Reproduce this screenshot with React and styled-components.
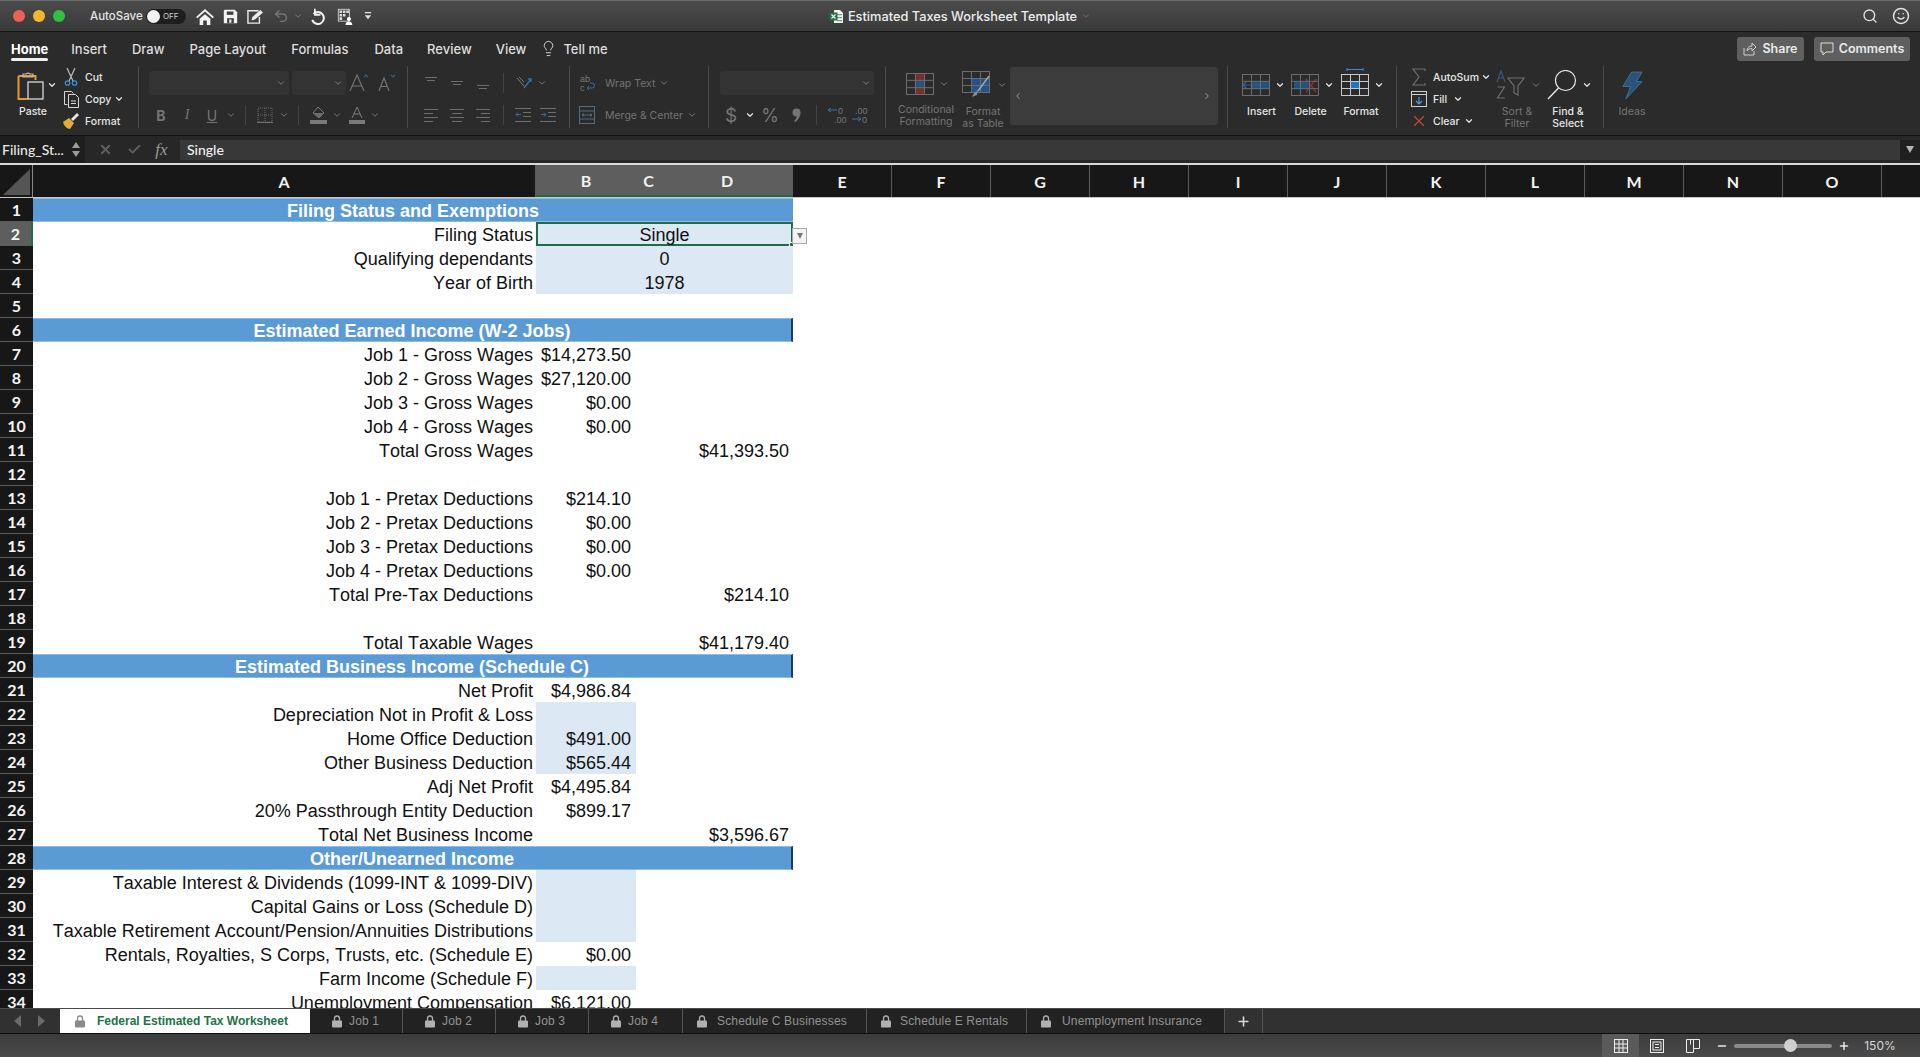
import styled, { createGlobalStyle } from "styled-components";
import { ChevronDown, Search, Smile, Lightbulb, Undo2, Check, X, Plus, Minus, ChevronLeft, ChevronRight } from "lucide-react";

const GlobalStyle = createGlobalStyle`
  html, body { margin: 0; padding: 0; height: 100%; background: #2b2b2b; }
  * { box-sizing: border-box; }
  svg { flex: none; }
`;

const uiFont = `"Inter", "Liberation Sans", sans-serif`;

const Window = styled.div`
  width: 1920px;
  height: 1057px;
  display: flex;
  flex-direction: column;
  overflow: hidden;
  font-family: ${uiFont};
  color: #e8e8e8;
`;

/* title bar */
const TitleBar = styled.div`
  height: 32px;
  flex: none;
  display: grid;
  grid-template-columns: 1fr auto 1fr;
  align-items: center;
  background: linear-gradient(#4c4c4c, #393939);
  border-top: 1px solid #6a6a6a;
  border-bottom: 1px solid #151515;
`;
const QuickBar = styled.div`
  display: flex;
  align-items: center;
  padding-left: 13px;
`;
const Light = styled.span`
  width: 12px;
  height: 12px;
  border-radius: 50%;
  margin-right: 8px;
  background: ${(p) => p.$c};
`;
const AutoSave = styled.span`
  font-size: 11.5px;
  font-weight: 500;
  margin-left: 17px;
  color: #e4e4e4;
  width: 56px;
`;
const Toggle = styled.span`
  width: 40px;
  height: 15px;
  border-radius: 8px;
  background: #1e1e1e;
  display: flex;
  align-items: center;
  gap: 3px;
  font-size: 8px;
  color: #cfcfcf;
  &::before {
    content: "";
    width: 13px;
    height: 13px;
    margin-left: 1px;
    border-radius: 50%;
    background: #f2f2f2;
  }
`;
const Title = styled.div`
  display: flex;
  align-items: center;
  gap: 4px;
  font-size: 12.8px;
  font-weight: 500;
  color: #ededed;
`;
const TitleRight = styled.div`
  display: flex;
  justify-content: flex-end;
  align-items: center;
  gap: 14px;
  padding-right: 10px;
  color: #e2e2e2;
`;

/* ribbon */
const Ribbon = styled.div`
  background: #2b2b2b;
  flex: none;
  border-bottom: 1px solid #0f0f0f;
`;
const TabRow = styled.div`
  height: 33px;
  display: flex;
  align-items: center;
  padding: 0 10px 0 11px;
`;
const RibbonTab = styled.span`
  flex: none;
  white-space: nowrap;
  font-size: 13px;
  font-weight: 500;
  margin-right: ${(p) => p.$gap}px;
  margin-left: ${(p) => p.$ml || 0}px;
  color: ${(p) => (p.$on ? "#fff" : "#dedede")};
  position: relative;
  ${(p) => p.$on && `
    font-weight: 700;
    &::after {
      content: "";
      position: absolute;
      left: 0;
      right: 0;
      bottom: -4px;
      height: 3px;
      border-radius: 2px;
      background: #efefef;
    }
  `}
`;
const TopButton = styled.span`
  height: 24px;
  width: ${(p) => p.$w}px;
  margin-left: ${(p) => (p.$push ? "auto" : `${p.$ml}px`)};
  background: #5f5f5f;
  border-radius: 3px;
  display: flex;
  align-items: center;
  justify-content: center;
  gap: 5px;
  font-size: 12.5px;
  font-weight: 600;
  color: #eaeaea;
`;
const GroupRow = styled.div`
  height: 70px;
  display: flex;
`;
const Group = styled.div`
  width: ${(p) => p.$w}px;
  height: 62px;
  margin-top: 1px;
  padding-left: ${(p) => p.$pl || 0}px;
  display: flex;
  ${(p) => p.$stack && "flex-direction: column; justify-content: flex-start;"}
  border-right: ${(p) => (p.$last ? "none" : "1px solid #4b4b4b")};
`;
const ToolRow = styled.div`
  display: flex;
  align-items: center;
  height: 24px;
  margin-top: ${(p) => p.$mt || 0}px;
  padding-left: ${(p) => p.$pl || 0}px;
`;
const Slot = styled.span`
  width: ${(p) => p.$w}px;
  flex: none;
  display: flex;
  align-items: center;
  justify-content: center;
  padding-bottom: ${(p) => p.$pb || 0}px;
  color: ${(p) => (p.$on ? "#e8e8e8" : "#757575")};
  font-size: ${(p) => p.$fs || 13}px;
  font-family: ${(p) => (p.$serif ? `"Liberation Serif", serif` : uiFont)};
  font-weight: ${(p) => p.$fw || 400};
  font-style: ${(p) => (p.$it ? "italic" : "normal")};
`;
const Divider = styled.span`
  width: ${(p) => p.$w}px;
  flex: none;
  display: flex;
  justify-content: center;
  &::before {
    content: "";
    width: 1px;
    height: 20px;
    background: #444;
  }
`;
const Combo = styled.span`
  width: ${(p) => p.$w}px;
  height: 24px;
  margin-right: ${(p) => p.$mr || 0}px;
  flex: none;
  background: #333;
  border-radius: 3px;
  display: flex;
  align-items: center;
  justify-content: flex-end;
  padding-right: 3px;
  color: #8a8a8a;
`;
const Small = styled.span`
  font-size: 10.5px;
  font-weight: ${(p) => (p.$on ? 500 : 400)};
  color: ${(p) => (p.$on ? "#e6e6e6" : "#737373")};
  white-space: nowrap;
  margin-left: ${(p) => p.$ml || 0}px;
  margin-top: ${(p) => p.$mt || 0}px;
`;
const PasteBlock = styled.div`
  width: 36px;
  flex: none;
  display: flex;
  flex-direction: column;
  align-items: center;
  padding-top: 5px;
`;
const ClipList = styled.div`
  width: ${(p) => (p.$w ? `${p.$w}px` : "auto")};
  flex: none;
  display: flex;
  flex-direction: column;
`;
const ClipRow = styled.div`
  height: 22px;
  flex: none;
  display: flex;
  align-items: center;
  padding-left: ${(p) => p.$pl || 0}px;
`;
const ClipIcon = styled.span`
  width: ${(p) => p.$w || 20}px;
  flex: none;
  display: flex;
  justify-content: center;
`;
const BigItem = styled.div`
  width: ${(p) => p.$w}px;
  flex: none;
  display: flex;
  flex-direction: column;
  align-items: center;
  padding-top: 6px;
`;
const BigIcon = styled.div`
  height: 26px;
  display: flex;
  align-items: center;
  padding-left: ${(p) => (p.$bare ? 0 : 8)}px;
`;
const Chev = styled.span`
  width: 20px;
  display: flex;
  justify-content: center;
  color: ${(p) => (p.$on ? "#e2e2e2" : "#777")};
`;
const BigLabel = styled.div`
  margin-top: 8px;
  font-size: 10.5px;
  line-height: 12px;
  text-align: center;
  font-weight: ${(p) => (p.$on ? 500 : 400)};
  color: ${(p) => (p.$on ? "#e6e6e6" : "#757575")};
  white-space: nowrap;
`;
const Gallery = styled.div`
  width: 208px;
  height: 58px;
  margin: 1px 0 0 4px;
  background: #3c3c3c;
  border-radius: 3px;
  display: flex;
  align-items: center;
  justify-content: space-between;
  padding: 0 6px 0 3px;
  color: #8e8e8e;
`;

/* formula bar */
const FormulaBar = styled.div`
  height: 29px;
  flex: none;
  display: flex;
  align-items: center;
  background: #272727;
  border-bottom: 2px solid #d9d9d9;
  font-family: "Lato", sans-serif;
  font-size: 14px;
  font-weight: 500;
`;
const NameBox = styled.div`
  width: 85px;
  height: 100%;
  flex: none;
  padding-left: 2px;
  display: flex;
  align-items: center;
  justify-content: space-between;
  background: #1e1e1e;
`;
const Stepper = styled.span`
  width: 18px;
  display: flex;
  flex-direction: column;
  align-items: center;
  gap: 3px;
  &::before, &::after {
    content: "";
    border-left: 4px solid transparent;
    border-right: 4px solid transparent;
  }
  &::before { border-bottom: 6px solid #9c9c9c; }
  &::after { border-top: 6px solid #9c9c9c; }
`;
const FxTools = styled.div`
  width: 95px;
  flex: none;
  display: flex;
  align-items: center;
  color: #5e5e5e;
`;
const Fx = styled.span`
  font-family: "Liberation Serif", serif;
  font-style: italic;
  font-size: 17px;
  color: #9a9a9a;
`;
const FormulaInput = styled.div`
  flex: 1;
  height: 20px;
  padding-left: 7px;
  line-height: 20px;
  background: #383838;
  color: #f0f0f0;
`;
const FormulaEnd = styled.div`
  width: 20px;
  flex: none;
  height: 20px;
  display: flex;
  align-items: center;
  justify-content: center;
  background: #1f1f1f;
  &::before {
    content: "";
    border-left: 4px solid transparent;
    border-right: 4px solid transparent;
    border-top: 7px solid #b5b5b5;
  }
`;

/* grid */
const ColumnHeader = styled.div`
  height: 33px;
  flex: none;
  display: grid;
  grid-template-columns: 33px 503px 100px 25px 132px repeat(11, 99px) 1fr;
  background: #171717;
  border-bottom: 1px solid #c6c6c6;
`;
const Corner = styled.div`
  background: #171717;
  border-right: 1px solid #888;
  padding: 4px 2px 2px 3px;
  &::before {
    content: "";
    display: block;
    height: 100%;
    background: #555;
    clip-path: polygon(100% 0, 100% 100%, 0 100%);
  }
`;
const ColLabel = styled.div`
  display: flex;
  align-items: center;
  justify-content: center;
  font-family: "Lato", sans-serif;
  font-size: 16px;
  font-weight: 700;
  color: #f2f2f2;
  background: ${(p) => (p.$on ? "#5e5e5e" : "transparent")};
  border-bottom: ${(p) => (p.$on ? "2px solid #1f6d48" : "none")};
  border-right: ${(p) => (p.$on ? "none" : "1px solid #5a5a5a")};
`;
const Sheet = styled.div`
  flex: 1;
  min-height: 0;
  overflow: hidden;
  background: #fff;
  font-family: "Liberation Sans", Arial, sans-serif;
  font-size: 18px;
  font-kerning: none;
  color: #111;
`;
const Row = styled.div`
  height: 24px;
  display: grid;
  grid-template-columns: 33px 503px 100px 25px 132px;
  grid-template-rows: 24px;
  align-items: stretch;
  line-height: 26px;
  white-space: nowrap;
`;
const RowNum = styled.div`
  display: flex;
  align-items: center;
  justify-content: center;
  font-family: "Lato", sans-serif;
  font-size: 16px;
  font-weight: 700;
  color: #f4f4f4;
  background: ${(p) => (p.$on ? "#5e5e5e" : "#171717")};
  border-bottom: 1px solid #5a5a5a;
  ${(p) => p.$on && "border-right: 2px solid #1f6d48;"}
`;
const Label = styled.div`
  text-align: right;
  padding-right: 3px;
`;
const Amount = styled.div`
  grid-column: ${(p) => p.$col};
  text-align: right;
  padding-right: ${(p) => (p.$col === 5 ? 4 : 5)}px;
  background: ${(p) => (p.$fill ? "#dce9f5" : "transparent")};
`;
const Merged = styled.div`
  grid-column: 3 / 6;
  text-align: center;
  position: relative;
  background: #dce9f5;
  ${(p) => p.$sel && `
    z-index: 1;
    border: 2px solid #1f6d48;
    line-height: 22px;
  `}
`;
const FillHandle = styled.span`
  position: absolute;
  right: -3px;
  bottom: -3px;
  width: 5px;
  height: 5px;
  background: #1f6d48;
  border: 1px solid #fff;
`;
const Dropper = styled.span`
  position: absolute;
  left: 100%;
  top: 4px;
  margin-left: 1px;
  width: 15px;
  height: 16px;
  background: #f4f4f4;
  border: 1px solid #aaa;
  display: flex;
  align-items: center;
  justify-content: center;
  &::before {
    content: "";
    border-left: 3.5px solid transparent;
    border-right: 3.5px solid transparent;
    border-top: 6px solid #777;
  }
`;
const Banner = styled.div`
  grid-column: 2 / 6;
  text-align: center;
  background: #5b9bd5;
  color: #fff;
  font-weight: 700;
  border-top: 1px solid #8fbce4;
  border-bottom: 1px solid #8fbce4;
  line-height: 24px;
  border-right: ${(p) => (p.$edge ? "2px solid #1c3c5c" : "none")};
`;

/* sheet tabs */
const TabStrip = styled.div`
  height: 26px;
  flex: none;
  display: flex;
  background: #313131;
  border-top: 1px solid #4a4a4a;
  border-bottom: 1px solid #0d0d0d;
  font-family: "Liberation Sans", Arial, sans-serif;
  font-size: 12px;
`;
const TabNav = styled.div`
  width: 60px;
  flex: none;
  display: flex;
  align-items: center;
  gap: 17px;
  padding-left: 14px;
`;
const NavArrow = styled.span`
  border-top: 6px solid transparent;
  border-bottom: 6px solid transparent;
  border-${(p) => (p.$next ? "left" : "right")}: 7px solid #6a6a6a;
`;
const SheetTab = styled.div`
  width: ${(p) => p.$w}px;
  height: 24px;
  flex: none;
  display: flex;
  align-items: center;
  gap: ${(p) => p.$gap || 8}px;
  padding-left: ${(p) => p.$pl}px;
  background: ${(p) => (p.$on ? "#fff" : "#222")};
  color: ${(p) => (p.$on ? "#217346" : "#939393")};
  font-weight: ${(p) => (p.$on ? 700 : 400)};
  letter-spacing: ${(p) => (p.$on ? 0 : 0.15)}px;
  border-right: ${(p) => (p.$on ? "none" : "1px solid #555")};
  white-space: nowrap;
`;
const AddTab = styled.div`
  width: 38px;
  flex: none;
  display: flex;
  align-items: center;
  justify-content: center;
  color: #d9d9d9;
  border-right: 1px solid #555;
`;

/* status bar */
const StatusBar = styled.div`
  height: 23px;
  flex: none;
  display: flex;
  align-items: center;
  justify-content: flex-end;
  padding-right: 20px;
  background: linear-gradient(#3c3c3c, #4a4a4a);
  color: #e0e0e0;
`;
const ViewBtn = styled.span`
  width: ${(p) => p.$w}px;
  height: 23px;
  flex: none;
  display: flex;
  align-items: center;
  justify-content: center;
  background: ${(p) => (p.$on ? "#5a5a5a" : "transparent")};
`;
const Slider = styled.span`
  width: 98px;
  height: 4px;
  flex: none;
  margin: 0 1px;
  border-radius: 2px;
  background: #8a8a8a;
  display: flex;
  align-items: center;
  padding-left: 50px;
  &::before {
    content: "";
    flex: none;
    width: 13px;
    height: 13px;
    border-radius: 50%;
    background: #cfcfcf;
  }
`;
const Zoom = styled.span`
  width: 40px;
  flex: none;
  margin-left: 5px;
  text-align: center;
  font-size: 12px;
  color: #d8d8d8;
`;

const chev = (on) => <ChevronDown size={10} strokeWidth={on ? 3 : 2.4} color={on ? "#e2e2e2" : "#7a7a7a"} />;

/* drawn icons */
const HomeIcon = () => (
  <svg width="18" height="17" viewBox="0 0 20 19" fill="#f2f2f2"><path d="M10 1 0 10l1.4 1.5L10 4l8.6 7.5L20 10zM4 12l6-5 6 5v7h-4v-5H8v5H4z" /></svg>
);
const SaveIcon = () => (
  <svg width="15" height="15" viewBox="0 0 18 18"><path fill="#f2f2f2" d="M2 1h12l3 3v13H1V2z" /><rect x="4.5" y="3" width="8" height="4" fill="#3f3f3f" /><rect x="5" y="11" width="8" height="6" fill="#3f3f3f" /><rect x="7.5" y="12.5" width="2.5" height="4" fill="#f2f2f2" /></svg>
);
const EditIcon = () => (
  <svg width="18" height="15" viewBox="0 0 20 17" fill="none" stroke="#ececec" strokeWidth="1.6"><path d="M15 9v7H2V2h12" /><path d="M6 13l1-4 9-8 3 3-9 8z" fill="#ececec" stroke="none" /></svg>
);
const RedoIcon = () => (
  <svg width="16" height="17" viewBox="0 0 18 20" fill="none" stroke="#f2f2f2" strokeWidth="2.4"><path d="M5 7a7 7 0 1 1-1.6 7" /><path d="M6.5 1v7H13" strokeWidth="2" /></svg>
);
const GridPerson = () => (
  <svg width="17" height="17" viewBox="0 0 20 20"><rect x="1.5" y="1.5" width="13" height="14" fill="none" stroke="#ddd" /><path d="M3 3h3v3H3zM7 3h3v3H7zM11 3h3v3h-3zM3 7h3v3H3zM7 7h3v3H7zM3 11h3v3H3z" fill="#ddd" /><circle cx="14" cy="13" r="2.4" fill="#fff" /><path d="M10 20c0-3 2-4 4-4s4 1 4 4z" fill="#fff" /></svg>
);
const MoreIcon = () => (
  <svg width="8" height="10" viewBox="0 0 10 12" fill="#e0e0e0"><rect x="1" y="1" width="8" height="1.6" /><path d="M1 5h8l-4 5z" /></svg>
);
const ExcelDoc = () => (
  <svg width="15" height="15" viewBox="0 0 15 15"><path d="M5 1h6l3 3v10H5z" fill="#f1f1f1" /><rect x="8" y="5" width="5" height="1.2" fill="#6a9a80" /><rect x="8" y="8" width="5" height="1.2" fill="#6a9a80" /><rect x="8" y="11" width="5" height="1.2" fill="#6a9a80" /><rect x="0.5" y="3.5" width="8" height="8" fill="#1f7244" /><path d="M2.5 5.5l4 4M6.5 5.5l-4 4" stroke="#fff" strokeWidth="1.1" /></svg>
);
const PasteIcon = () => (
  <svg width="32" height="29" viewBox="0 0 32 29" fill="none"><path d="M1.5 5h17v4M1.5 5v23h9" stroke="#e59a2c" strokeWidth="2" /><path d="M6 5V3h3a3 3 0 0 1 4 0h3v3H6z" stroke="#bbb" strokeWidth="1.2" /><rect x="11" y="11" width="15" height="17" stroke="#e6e6e6" strokeWidth="1.2" /></svg>
);
const ScissorsIcon = () => (
  <svg width="14" height="20" viewBox="0 0 14 20" fill="none"><path d="M3 1l6 13M11 1L5 14" stroke="#bcbcbc" strokeWidth="1.2" /><circle cx="3.5" cy="16" r="2.2" stroke="#3a8ed8" strokeWidth="1.3" /><circle cx="10.5" cy="16" r="2.2" stroke="#3a8ed8" strokeWidth="1.3" /></svg>
);
const CopyIcon = () => (
  <svg width="17" height="18" viewBox="0 0 17 18" fill="none" stroke="#d8d8d8"><path d="M4.5 14.5h-3v-13h7l2 2" /><path d="M5.5 4.5h7l3 3v10h-10z" /><path d="M8 11h5M8 13.5h5" /></svg>
);
const BrushIcon = () => (
  <svg width="18" height="18" viewBox="0 0 18 18"><path d="M1 10l6-4 5 5-4 6c-3 0-6-3-7-7z" fill="#e8a93a" /><path d="M9 7l6-6 2 2-6 6z" fill="#e6e6e6" /></svg>
);
const BigA = ({ size, up }) => (
  <svg width="22" height="20" viewBox="0 0 22 20" fill="none" stroke="#727272" strokeWidth="1.2"><path d={size === 1 ? "M2 18 9 2l7 16M4.5 13h9" : "M4 18 9 5l5 13M6 13.5h6"} /><path d={up ? "M16 4l2-2 2 2" : "M16 2l2 2 2-2"} stroke="#3f5f82" /></svg>
);
const Borders = () => (
  <svg width="16" height="16" viewBox="0 0 16 16" fill="none" stroke="#6e6e6e" strokeDasharray="1 1"><rect x="1" y="1" width="14" height="14" /><path d="M8 1v14M1 8h14" /><path d="M0 15.5h16" strokeDasharray="none" /></svg>
);
const FillColor = () => (
  <svg width="18" height="18" viewBox="0 0 18 18"><path d="M8 1l6 6-5 5-6-5z" fill="none" stroke="#777" /><path d="M3 7h10l-4 5z" fill="#6b6b6b" /><rect x="0" y="14" width="17" height="4" fill="#7a7a7a" /></svg>
);
const FontColor = () => (
  <svg width="18" height="18" viewBox="0 0 18 18" fill="none"><path d="M4 12 9 1l5 11M6 8h6" stroke="#7a7a7a" /><rect x="1" y="14" width="16" height="4" fill="#7a7a7a" /></svg>
);
const AlignIcon = ({ rows }) => (
  <svg width="16" height="16" viewBox="0 0 16 16" stroke="#6e6e6e">{rows.map(([y, a, b]) => <path key={y} d={`M${a} ${y}.5H${b}`} />)}</svg>
);
const Orient = () => (
  <svg width="18" height="16" viewBox="0 0 18 16" fill="none"><path d="M2 3l7 8M4 2l5 5" stroke="#777" /><path d="M9 13l7-9M13 4h3v3" stroke="#3f6a94" strokeWidth="1.4" /></svg>
);
const Indent = ({ flip }) => (
  <svg width="16" height="14" viewBox="0 0 16 14" stroke="#6e6e6e"><path d="M0 .5h16M8 4.5h8M8 8.5h8M0 13.5h16" /><path d={flip ? "M1 6.5h5M4 4.5l2 2-2 2" : "M1 6.5h5M3 4.5l-2 2 2 2"} stroke="#3f6a94" fill="none" /></svg>
);
const WrapIcon = () => (
  <svg width="18" height="20" viewBox="0 0 18 20" fill="none"><text x="2" y="9" fontSize="9" fill="#777" fontFamily="Liberation Sans">ab</text><text x="2" y="18" fontSize="9" fill="#777" fontFamily="Liberation Sans">c</text><path d="M9 15h5a2 2 0 0 0 0-5h-2M11 13l-2 2 2 2" stroke="#3f6a94" /></svg>
);
const MergeIcon = () => (
  <svg width="16" height="18" viewBox="0 0 16 18" fill="none" stroke="#566a7e"><rect x=".5" y=".5" width="15" height="17" /><path d="M.5 5h15M.5 13h15M3 9h10M5 7.5 3 9l2 1.5M11 7.5 13 9l-2 1.5" /></svg>
);
const CommaIcon = () => (
  <svg width="9" height="14" viewBox="0 0 9 14" fill="#757575"><circle cx="4.5" cy="4.5" r="4" /><path d="M8.4 4.5C8.5 8 6.5 12 3 14l-.8-1C4 11.5 4.8 9 4.5 7z" /></svg>
);
const DecIcon = ({ flip }) => (
  <svg width="22" height="18" viewBox="0 0 22 18">
    <text x={flip ? 7 : 12} y="8" fontSize="9" fill="#777" fontFamily="Liberation Sans">{flip ? ".00" : "0"}</text>
    <text x={flip ? 14 : 8} y="17" fontSize="9" fill="#777" fontFamily="Liberation Sans">{flip ? "0" : ".00"}</text>
    <path d={flip ? "M4 13h9M10 11l3 2-3 2" : "M11 4H2M5 2 2 4l3 2"} stroke="#3a70a8" fill="none" />
  </svg>
);
const TableGrid = ({ children, w = 28, h = 22 }) => (
  <svg width={w} height={h} viewBox={`0 0 ${w} ${h}`} fill="none">
    {children}
    <g stroke="#6c6c6c">
      <rect x=".5" y=".5" width="27" height={h - 1} />
      <path d={`M9.5 0V${h}M18.5 0V${h}M0 ${h / 3}H28M0 ${(2 * h) / 3}H28`} />
    </g>
  </svg>
);
const CondIcon = () => (
  <TableGrid><rect x="9" y="1" width="10" height="7" fill="#7a2d2d" /><rect x="9" y="8" width="10" height="7" fill="#24527f" /><rect x="9" y="15" width="10" height="6" fill="#7a2d2d" /></TableGrid>
);
const TableBrush = () => (
  <svg width="30" height="28" viewBox="0 0 30 28" fill="none">
    <rect x="10" y="8" width="17" height="14" fill="#22548a" />
    <g stroke="#6c6c6c"><rect x=".5" y=".5" width="27" height="21" /><path d="M9.5 0v22M18.5 0v22M0 7.5h28M0 14.5h28" /></g>
    <path d="M27 5 16 20" stroke="#a8a8a8" strokeWidth="1.4" /><path d="M16 19l-4 3-2 4 5-2z" fill="#8a8a8a" />
  </svg>
);
const InsertIcon = () => (
  <TableGrid><rect x="9" y="7" width="19" height="8" fill="#24527f" /><path d="M18 11H1M5 7l-4 4 4 4" stroke="#2f6296" strokeWidth="1.2" /></TableGrid>
);
const DeleteIcon = () => (
  <TableGrid><rect x="3" y="7" width="15" height="8" fill="#24527f" /><path d="M15 5l10 13M25 5 15 18" stroke="#7e3333" strokeWidth="1.6" /></TableGrid>
);
const FormatIcon = () => (
  <svg width="28" height="22" viewBox="0 4 28 22" fill="none" overflow="visible">
    <path d="M6 -.5h16M6 -2v3M22 -2v3" stroke="#3a8ed8" />
    <rect x="9" y="11" width="10" height="7" fill="#1976c8" />
    <g stroke="#c8c8c8"><rect x=".5" y="4.5" width="27" height="21" /><path d="M9.5 4v22M18.5 4v22M0 11.5h28M0 18.5h28" /></g>
  </svg>
);
const Sigma = () => (
  <svg width="16" height="18" viewBox="0 0 16 18" fill="none" stroke="#6e6e6e" strokeWidth="1.2"><path d="M14 3V1H2l6 8-6 8h12v-2" /></svg>
);
const FillDown = () => (
  <svg width="16" height="16" viewBox="0 0 16 16" fill="none"><rect x=".5" y=".5" width="15" height="15" stroke="#cfcfcf" /><path d="M1 3.5h14" stroke="#cfcfcf" /><path d="M8 6v7M5 10l3 3 3-3" stroke="#4a9ae0" strokeWidth="1.2" /></svg>
);
const SortIcon = () => (
  <svg width="30" height="30" viewBox="0 0 30 30" fill="none">
    <path d="M1 12 5 1l4 11M2.5 8h5" stroke="#2f5a88" strokeWidth="1.2" />
    <path d="M1.5 17h7l-7 11h7.5" stroke="#6e6e6e" strokeWidth="1.2" />
    <path d="M12 8h16l-6 8v9l-4-2v-7z" stroke="#6e6e6e" strokeWidth="1.2" />
  </svg>
);
const FindIcon = () => (
  <svg width="30" height="30" viewBox="0 0 30 30" fill="none" stroke="#e8e8e8"><circle cx="18.5" cy="10.5" r="10" strokeWidth="1.2" /><path d="M11.5 18 1 29" strokeWidth="1.4" /></svg>
);
const Bolt = () => (
  <svg width="23" height="29" viewBox="0 0 24 30" fill="#2b5379" stroke="#3e719e"><path d="M11 1h11l-6 10h6L5 29l5-13H2z" /></svg>
);
const ShareIcon = () => (
  <svg width="14" height="14" viewBox="0 0 14 14" fill="none" stroke="#cfcfcf"><path d="M1 6v7h10V9" /><path d="M4 9c0-3 2-5 5-5V1l4 4-4 4V6.5C7 6.5 5 7 4 9z" /></svg>
);
const CommentIcon = () => (
  <svg width="14" height="14" viewBox="0 0 14 14" fill="none" stroke="#dedede"><path d="M1 1h12v9H6l-3 3v-3H1z" /></svg>
);
const LockIcon = ({ color }) => (
  <svg width="10" height="13" viewBox="0 0 10 13"><path d="M2.5 6V3.5a2.5 2.5 0 0 1 5 0V6" fill="none" stroke={color} strokeWidth="1.3" /><rect y="5.5" width="10" height="7" rx="1" fill={color} /></svg>
);
const GridView = () => (
  <svg width="14" height="14" viewBox="0 0 14 14" fill="none" stroke="#eee"><rect x=".5" y=".5" width="13" height="13" /><path d="M5 0v14M9 0v14M0 5h14M0 9h14" /></svg>
);
const PageView = () => (
  <svg width="14" height="14" viewBox="0 0 14 14" fill="none" stroke="#eee"><rect x=".5" y=".5" width="13" height="13" /><rect x="3" y="3" width="8" height="8" /><path d="M5 5.5h4M5 8.5h4" /></svg>
);
const BreakView = () => (
  <svg width="14" height="14" viewBox="0 0 14 14" fill="none" stroke="#eee"><path d="M.5 .5h13v9H7.5V.5M4.5 .5v5M.5 .5v13h7V9.5" /></svg>
);

const rows = [
  { banner: "Filing Status and Exemptions" },
  { label: "Filing Status", merged: "Single", sel: true },
  { label: "Qualifying dependants", merged: "0" },
  { label: "Year of Birth", merged: "1978" },
  {},
  { banner: "Estimated Earned Income (W-2 Jobs)", edge: true },
  { label: "Job 1 - Gross Wages", b: "$14,273.50" },
  { label: "Job 2 - Gross Wages", b: "$27,120.00" },
  { label: "Job 3 - Gross Wages", b: "$0.00" },
  { label: "Job 4 - Gross Wages", b: "$0.00" },
  { label: "Total Gross Wages", d: "$41,393.50" },
  {},
  { label: "Job 1 - Pretax Deductions", b: "$214.10" },
  { label: "Job 2 - Pretax Deductions", b: "$0.00" },
  { label: "Job 3 - Pretax Deductions", b: "$0.00" },
  { label: "Job 4 - Pretax Deductions", b: "$0.00" },
  { label: "Total Pre-Tax Deductions", d: "$214.10" },
  {},
  { label: "Total Taxable Wages", d: "$41,179.40" },
  { banner: "Estimated Business Income (Schedule C)", edge: true },
  { label: "Net Profit", b: "$4,986.84" },
  { label: "Depreciation Not in Profit & Loss", b: "", fill: true },
  { label: "Home Office Deduction", b: "$491.00", fill: true },
  { label: "Other Business Deduction", b: "$565.44", fill: true },
  { label: "Adj Net Profit", b: "$4,495.84" },
  { label: "20% Passthrough Entity Deduction", b: "$899.17" },
  { label: "Total Net Business Income", d: "$3,596.67" },
  { banner: "Other/Unearned Income", edge: true },
  { label: "Taxable Interest & Dividends (1099-INT & 1099-DIV)", b: "", fill: true },
  { label: "Capital Gains or Loss (Schedule D)", b: "", fill: true },
  { label: "Taxable Retirement Account/Pension/Annuities Distributions", b: "", fill: true },
  { label: "Rentals, Royalties, S Corps, Trusts, etc. (Schedule E)", b: "$0.00" },
  { label: "Farm Income (Schedule F)", b: "", fill: true },
  { label: "Unemployment Compensation", b: "$6,121.00" },
];

const columns = ["A", "B", "C", "D", "E", "F", "G", "H", "I", "J", "K", "L", "M", "N", "O"];

const sheetTabs = [
  { name: "Job 1", w: 93, pl: 22, gap: 7 },
  { name: "Job 2", w: 93, pl: 22, gap: 7 },
  { name: "Job 3", w: 93, pl: 22, gap: 7 },
  { name: "Job 4", w: 94, pl: 22, gap: 7 },
  { name: "Schedule C Businesses", w: 184, pl: 14, gap: 10 },
  { name: "Schedule E Rentals", w: 160, pl: 14, gap: 9 },
  { name: "Unemployment Insurance", w: 198, pl: 14, gap: 11 },
];

const alignTop = [[[2, 2, 14], [5, 4, 12]], [[6, 2, 14], [9, 4, 12]], [[10, 2, 14], [13, 4, 12]]];
const alignBottom = [
  [[2, 1, 15], [6, 1, 10], [10, 1, 15], [14, 1, 10]],
  [[2, 1, 15], [6, 3, 13], [10, 1, 15], [14, 3, 13]],
  [[2, 1, 15], [6, 6, 15], [10, 1, 15], [14, 6, 15]],
];

const App = () => {
  return (
    <Window>
      <GlobalStyle />
      <TitleBar>
        <QuickBar>
          <Light $c="#ee5f56" />
          <Light $c="#f5b829" />
          <Light $c="#2fc240" />
          <AutoSave>AutoSave</AutoSave>
          <Toggle>OFF</Toggle>
          <Slot $w={38} $on><HomeIcon /></Slot>
          <Slot $w={12} $on><SaveIcon /></Slot>
          <Slot $w={38} $on><EditIcon /></Slot>
          <Slot $w={14}><Undo2 size={16} color="#777" /></Slot>
          <Slot $w={20}>{chev(false)}</Slot>
          <Slot $w={18} $on><RedoIcon /></Slot>
          <Slot $w={38} $on><GridPerson /></Slot>
          <Slot $w={8} $on><MoreIcon /></Slot>
        </QuickBar>
        <Title>
          <ExcelDoc />
          Estimated Taxes Worksheet Template
          <ChevronDown size={10} color="#777" />
        </Title>
        <TitleRight>
          <Search size={16} />
          <Smile size={18} />
        </TitleRight>
      </TitleBar>

      <Ribbon>
        <TabRow>
          <RibbonTab $on $gap={23}>Home</RibbonTab>
          <RibbonTab $gap={25}>Insert</RibbonTab>
          <RibbonTab $gap={25}>Draw</RibbonTab>
          <RibbonTab $gap={25}>Page Layout</RibbonTab>
          <RibbonTab $gap={26}>Formulas</RibbonTab>
          <RibbonTab $gap={24}>Data</RibbonTab>
          <RibbonTab $gap={24}>Review</RibbonTab>
          <RibbonTab $gap={14}>View</RibbonTab>
          <Lightbulb size={17} color="#dcdcdc" strokeWidth={1.3} />
          <RibbonTab $gap={0} $ml={6}>Tell me</RibbonTab>
          <TopButton $w={67} $push><ShareIcon />Share</TopButton>
          <TopButton $w={96} $ml={10}><CommentIcon />Comments</TopButton>
        </TabRow>
        <GroupRow>
          <Group $w={139} $pl={15}>
            <PasteBlock>
              <PasteIcon />
              <Small $on $mt={5}>Paste</Small>
            </PasteBlock>
            <Slot $w={2} $on $pb={24}>{chev(true)}</Slot>
            <ClipList>
              <ClipRow $pl={8}><ClipIcon><ScissorsIcon /></ClipIcon><Small $on $ml={4}>Cut</Small></ClipRow>
              <ClipRow $pl={8}><ClipIcon><CopyIcon /></ClipIcon><Small $on $ml={4}>Copy</Small><Slot $w={16} $on>{chev(true)}</Slot></ClipRow>
              <ClipRow $pl={8}><ClipIcon><BrushIcon /></ClipIcon><Small $on $ml={4}>Format</Small></ClipRow>
            </ClipList>
          </Group>
          <Group $w={269} $stack>
            <ToolRow $pl={10} $mt={5}>
              <Combo $w={140} $mr={3}>{chev(false)}</Combo>
              <Combo $w={54}>{chev(false)}</Combo>
              <Slot $w={26}><BigA size={1} up /></Slot>
              <Slot $w={28}><BigA size={2} /></Slot>
            </ToolRow>
            <ToolRow $pl={10} $mt={8}>
              <Slot $w={24} $fs={14} $fw={700}>B</Slot>
              <Slot $w={28} $fs={14} $serif $it>I</Slot>
              <Slot $w={22} $fs={14}><u>U</u></Slot>
              <Slot $w={16}>{chev(false)}</Slot>
              <Divider $w={12} />
              <Slot $w={28}><Borders /></Slot>
              <Slot $w={10}>{chev(false)}</Slot>
              <Divider $w={18} />
              <Slot $w={24}><FillColor /></Slot>
              <Slot $w={12}>{chev(false)}</Slot>
              <Slot $w={28}><FontColor /></Slot>
              <Slot $w={8}>{chev(false)}</Slot>
            </ToolRow>
          </Group>
          <Group $w={162} $stack>
            <ToolRow $pl={10} $mt={5}>
              {alignTop.map((r, i) => <Slot key={i} $w={26}><AlignIcon rows={r} /></Slot>)}
              <Divider $w={14} />
              <Slot $w={28}><Orient /></Slot>
              <Slot $w={8}>{chev(false)}</Slot>
            </ToolRow>
            <ToolRow $pl={10} $mt={8}>
              {alignBottom.map((r, i) => <Slot key={i} $w={26}><AlignIcon rows={r} /></Slot>)}
              <Divider $w={14} />
              <Slot $w={26}><Indent /></Slot>
              <Slot $w={24}><Indent flip /></Slot>
            </ToolRow>
          </Group>
          <Group $w={139} $stack>
            <ToolRow $pl={8} $mt={5}>
              <Slot $w={18}><WrapIcon /></Slot>
              <Small $ml={9}>Wrap Text</Small>
              <Slot $w={18}>{chev(false)}</Slot>
            </ToolRow>
            <ToolRow $pl={8} $mt={8}>
              <Slot $w={18}><MergeIcon /></Slot>
              <Small $ml={9}>Merge &amp; Center</Small>
              <Slot $w={18}>{chev(false)}</Slot>
            </ToolRow>
          </Group>
          <Group $w={177} $stack>
            <ToolRow $pl={11} $mt={5}>
              <Combo $w={154}>{chev(false)}</Combo>
            </ToolRow>
            <ToolRow $pl={11} $mt={8}>
              <Slot $w={22} $fs={19}>$</Slot>
              <Slot $w={16} $on>{chev(true)}</Slot>
              <Slot $w={24} $fs={18}>%</Slot>
              <Slot $w={28}><CommaIcon /></Slot>
              <Divider $w={12} />
              <Slot $w={30}><DecIcon /></Slot>
              <Slot $w={14}><DecIcon flip /></Slot>
            </ToolRow>
          </Group>
          <Group $w={342} $pl={6}>
            <BigItem $w={68}>
              <BigIcon><CondIcon /><Chev>{chev(false)}</Chev></BigIcon>
              <BigLabel>Conditional<br />Formatting</BigLabel>
            </BigItem>
            <BigItem $w={46}>
              <BigIcon><TableBrush /><Chev>{chev(false)}</Chev></BigIcon>
              <BigLabel>Format<br />as Table</BigLabel>
            </BigItem>
            <Gallery>
              <ChevronLeft size={10} strokeWidth={2.5} />
              <ChevronRight size={10} strokeWidth={2.5} />
            </Gallery>
          </Group>
          <Group $w={169} $pl={9}>
            <BigItem $w={49}>
              <BigIcon><InsertIcon /><Chev $on>{chev(true)}</Chev></BigIcon>
              <BigLabel $on>Insert</BigLabel>
            </BigItem>
            <BigItem $w={49}>
              <BigIcon><DeleteIcon /><Chev $on>{chev(true)}</Chev></BigIcon>
              <BigLabel $on>Delete</BigLabel>
            </BigItem>
            <BigItem $w={52}>
              <BigIcon><FormatIcon /><Chev $on>{chev(true)}</Chev></BigIcon>
              <BigLabel $on>Format</BigLabel>
            </BigItem>
          </Group>
          <Group $w={207} $pl={12}>
            <ClipList $w={83}>
              <ClipRow><ClipIcon><Sigma /></ClipIcon><Small $on $ml={4}>AutoSum</Small><Slot $w={14} $on>{chev(true)}</Slot></ClipRow>
              <ClipRow><ClipIcon><FillDown /></ClipIcon><Small $on $ml={4}>Fill</Small><Slot $w={22} $on>{chev(true)}</Slot></ClipRow>
              <ClipRow><ClipIcon><X size={18} color="#c94a40" strokeWidth={1.5} /></ClipIcon><Small $on $ml={4}>Clear</Small><Slot $w={18} $on>{chev(true)}</Slot></ClipRow>
            </ClipList>
            <BigItem $w={50}>
              <BigIcon><SortIcon /><Chev>{chev(false)}</Chev></BigIcon>
              <BigLabel>Sort &amp;<br />Filter</BigLabel>
            </BigItem>
            <BigItem $w={52}>
              <BigIcon><FindIcon /><Chev $on>{chev(true)}</Chev></BigIcon>
              <BigLabel $on>Find &amp;<br />Select</BigLabel>
            </BigItem>
          </Group>
          <Group $w={56} $last>
            <BigItem $w={56}>
              <BigIcon $bare><Bolt /></BigIcon>
              <BigLabel>Ideas</BigLabel>
            </BigItem>
          </Group>
        </GroupRow>
      </Ribbon>

      <FormulaBar>
        <NameBox>Filing_St...<Stepper /></NameBox>
        <FxTools>
          <Slot $w={40}><X size={15} strokeWidth={3} color="#5e5e5e" /></Slot>
          <Slot $w={18}><Check size={15} strokeWidth={3} color="#5e5e5e" /></Slot>
          <Slot $w={37}><Fx>fx</Fx></Slot>
        </FxTools>
        <FormulaInput>Single</FormulaInput>
        <FormulaEnd />
      </FormulaBar>

      <ColumnHeader>
        <Corner />
        {columns.map((c) => (
          <ColLabel key={c} $on={c === "B" || c === "C" || c === "D"}>{c}</ColLabel>
        ))}
      </ColumnHeader>

      <Sheet>
        {rows.map((r, i) => (
          <Row key={i}>
            <RowNum $on={i === 1}>{i + 1}</RowNum>
            {r.banner ? (
              <Banner $edge={r.edge}>{r.banner}</Banner>
            ) : (
              <>
                <Label>{r.label}</Label>
                {r.merged && (
                  <Merged $sel={r.sel}>
                    {r.merged}
                    {r.sel && <FillHandle />}
                    {r.sel && <Dropper />}
                  </Merged>
                )}
                {r.b !== undefined && <Amount $col={3} $fill={r.fill}>{r.b}</Amount>}
                {r.d && <Amount $col={5}>{r.d}</Amount>}
              </>
            )}
          </Row>
        ))}
      </Sheet>

      <TabStrip>
        <TabNav>
          <NavArrow />
          <NavArrow $next />
        </TabNav>
        <SheetTab $on $w={250} $pl={15} $gap={12}>
          <LockIcon color="#8a8a8a" />
          Federal Estimated Tax Worksheet
        </SheetTab>
        {sheetTabs.map((t) => (
          <SheetTab key={t.name} $w={t.w} $pl={t.pl} $gap={t.gap}>
            <LockIcon color="#b0b0b0" />
            {t.name}
          </SheetTab>
        ))}
        <AddTab><Plus size={15} strokeWidth={2.5} /></AddTab>
      </TabStrip>

      <StatusBar>
        <ViewBtn $on $w={37}><GridView /></ViewBtn>
        <ViewBtn $w={36}><PageView /></ViewBtn>
        <ViewBtn $w={36}><BreakView /></ViewBtn>
        <Slot $w={22} $on><Minus size={12} strokeWidth={3} /></Slot>
        <Slider />
        <Slot $w={22} $on><Plus size={12} strokeWidth={3} /></Slot>
        <Zoom>150%</Zoom>
      </StatusBar>
    </Window>
  );
};

export default App;
